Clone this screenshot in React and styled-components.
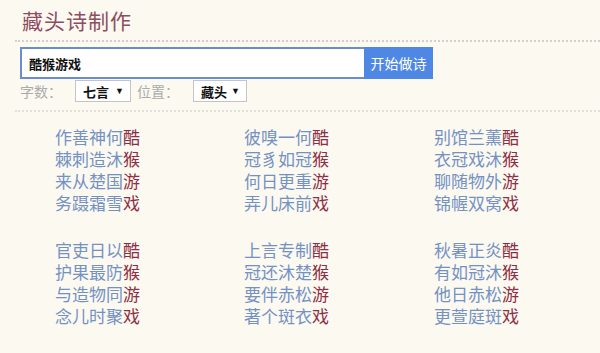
import React, { useState } from 'react';
import styled, { createGlobalStyle } from 'styled-components';

const GlobalStyle = createGlobalStyle`
    html, body {
        margin: 0;
        padding: 0;
        background: #fcf9f1;
    }
    body {
        font-family: 'Liberation Sans', 'Noto Sans CJK SC', sans-serif;
    }
`;

const Page = styled.div`
    width: 600px;
    height: 353px;
    overflow: hidden;
    background: #fcf9f1;
`;

const Header = styled.h1`
    margin: 0 0 0 15px;
    height: 40px;
    padding-left: 7px;
    display: flex;
    align-items: center;
    font-size: 21px;
    font-weight: normal;
    color: #8d4c5f;
    letter-spacing: 1px;
    border-bottom: 2px dotted #d2d0cb;
`;

const Form = styled.div`
    margin: 5px 0 0 20px;
`;

const SearchRow = styled.div`
    display: flex;
    height: 32px;
`;

const Input = styled.input`
    box-sizing: border-box;
    width: 344px;
    height: 32px;
    margin: 0;
    padding: 0 0 0 7px;
    border: 2px solid #6a8dd2;
    border-right: none;
    background: #fff;
    font-family: inherit;
    font-size: 13px;
    font-weight: bold;
    color: #111;
    outline: none;
`;

const Submit = styled.button`
    width: 69px;
    height: 32px;
    margin: 0;
    padding: 0;
    border: none;
    background: #4f88e4;
    color: #fff;
    font-family: inherit;
    font-size: 14px;
    cursor: pointer;
`;

const OptionRow = styled.div`
    display: flex;
    align-items: center;
    height: 22px;
    margin-top: 1px;
`;

const Label = styled.span`
    font-size: 14px;
    color: #ababab;
    margin-right: ${p => p.$gap}px;
`;

const Select = styled.span`
    box-sizing: border-box;
    display: inline-flex;
    align-items: center;
    justify-content: space-between;
    width: ${p => p.$w}px;
    height: 22px;
    padding: 0 6px 0 7px;
    margin-right: ${p => p.$after}px;
    border: 1px solid #c4c4c4;
    background: #fff;
    font-size: 13px;
    font-weight: bold;
    color: #111;

    &::after {
        content: '▼';
        font-size: 9px;
        font-weight: normal;
    }
`;

const Divider = styled.div`
    margin: 8px 0 0 15px;
    border-bottom: 2px dotted #e2e0da;
`;

const Poems = styled.div`
    padding: 16px 0 0 55px;
`;

const Group = styled.div`
    display: grid;
    grid-template-columns: 189px 190px 150px;
    margin-bottom: 25px;
`;

const Poem = styled.div`
    font-size: 17px;
    line-height: 22px;
    color: #7392c3;
`;

const Head = styled.span`
    color: #8e2d43;
`;

const groups = [
    [
        ['作善神何', '棘刺造沐', '来从楚国', '务蹑霜雪'],
        ['彼嗅一何', '冠豸如冠', '何日更重', '弄儿床前'],
        ['别馆兰薰', '衣冠戏沐', '聊随物外', '锦幄双窝'],
    ],
    [
        ['官吏日以', '护果最防', '与造物同', '念儿时聚'],
        ['上言专制', '冠还沐楚', '要伴赤松', '著个斑衣'],
        ['秋暑正炎', '有如冠沐', '他日赤松', '更萱庭斑'],
    ],
];

const heads = ['酷', '猴', '游', '戏'];

const App = () => {
    const [word, setWord] = useState('酷猴游戏');

    return (
        <Page>
            <GlobalStyle />
            <Header>藏头诗制作</Header>
            <Form>
                <SearchRow>
                    <Input value={word} onChange={e => setWord(e.target.value)} />
                    <Submit>开始做诗</Submit>
                </SearchRow>
                <OptionRow>
                    <Label $gap={13}>字数：</Label>
                    <Select $w={56} $after={6}>七言</Select>
                    <Label $gap={14}>位置：</Label>
                    <Select $w={54} $after={0}>藏头</Select>
                </OptionRow>
            </Form>
            <Divider />
            <Poems>
                {groups.map((group, gi) => (
                    <Group key={gi}>
                        {group.map((lines, pi) => (
                            <div key={pi}>
                                {lines.map((line, li) => (
                                    <Poem key={li}>
                                        {line}<Head>{heads[li]}</Head>
                                    </Poem>
                                ))}
                            </div>
                        ))}
                    </Group>
                ))}
            </Poems>
        </Page>
    );
};

export default App;
